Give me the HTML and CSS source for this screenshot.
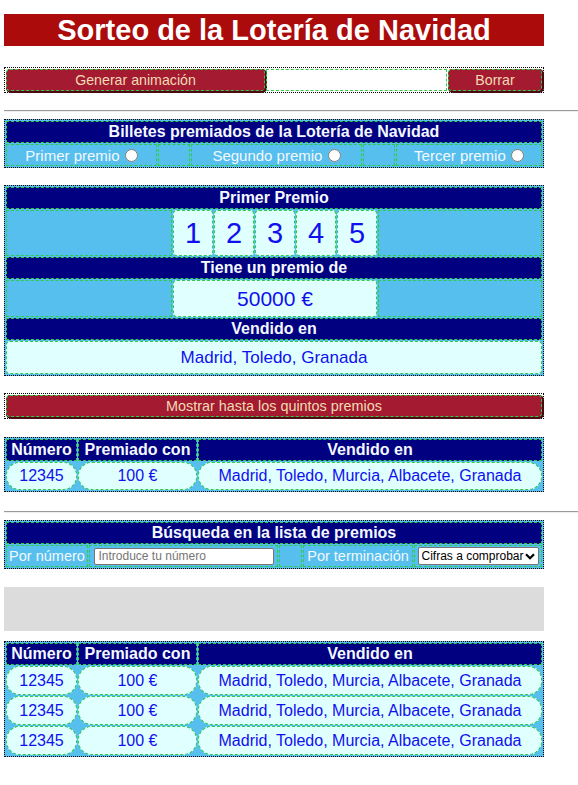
FILE: index.html
```html
<!DOCTYPE html>
<html lang="es">
<head>
<meta charset="utf-8">
<title>Sorteo de la Lotería de Navidad</title>
<link rel="stylesheet" href="styles.css">
</head>
<body>
<h1 class="title">Sorteo de la Lotería de Navidad</h1>

<table class="grid actions">
  <colgroup><col class="w-gen"><col><col class="w-del"></colgroup>
  <tr>
    <td class="bare"><button class="btn">Generar animación</button></td>
    <td class="c-mid"></td>
    <td class="bare"><button class="btn">Borrar</button></td>
  </tr>
</table>

<hr class="rule rule-a">

<table class="grid blue billetes">
  <colgroup><col class="w151"><col class="w32"><col class="w171"><col class="w32"><col></colgroup>
  <tr><th colspan="5" class="head">Billetes premiados de la Lotería de Navidad</th></tr>
  <tr class="radios">
    <td>Primer premio <input type="radio" name="p"></td>
    <td></td>
    <td>Segundo premio <input type="radio" name="p"></td>
    <td></td>
    <td>Tercer premio <input type="radio" name="p"></td>
  </tr>
</table>

<table class="grid blue primer">
  <colgroup><col class="w166"><col class="w40"><col class="w40"><col class="w40"><col class="w40"><col class="w40"><col></colgroup>
  <tr><th colspan="7" class="head">Primer Premio</th></tr>
  <tr class="digits">
    <td></td>
    <td class="cell dg">1</td>
    <td class="cell dg">2</td>
    <td class="cell dg">3</td>
    <td class="cell dg">4</td>
    <td class="cell dg">5</td>
    <td></td>
  </tr>
  <tr><th colspan="7" class="head">Tiene un premio de</th></tr>
  <tr class="prize">
    <td></td>
    <td colspan="5" class="cell amount">50000 €</td>
    <td></td>
  </tr>
  <tr><th colspan="7" class="head">Vendido en</th></tr>
  <tr>
    <td colspan="7" class="cell places">Madrid, Toledo, Granada</td>
  </tr>
</table>

<table class="grid actions more">
  <tr><td class="bare"><button class="btn long">Mostrar hasta los quintos premios</button></td></tr>
</table>

<table class="grid blue results first-results">
  <colgroup><col class="w71"><col class="w119"><col></colgroup>
  <tr>
    <th class="head">Número</th>
    <th class="head">Premiado con</th>
    <th class="head">Vendido en</th>
  </tr>
  <tr class="rrow">
    <td class="cell pill">12345</td>
    <td class="cell pill">100 €</td>
    <td class="cell pill">Madrid, Toledo, Murcia, Albacete, Granada</td>
  </tr>
</table>

<hr class="rule rule-b">

<table class="grid blue search">
  <colgroup><col class="w82"><col class="w189"><col class="w23"><col class="w110"><col></colgroup>
  <tr><th colspan="5" class="head">Búsqueda en la lista de premios</th></tr>
  <tr class="srow">
    <td>Por número</td>
    <td><input class="num" type="text" placeholder="Introduce tu número"></td>
    <td></td>
    <td>Por terminación</td>
    <td>
      <span class="select-wrap">
        <select class="cifras"><option>Cifras a comprobar</option></select>
        <svg class="chev" width="10" height="7" viewBox="0 0 10 7" aria-hidden="true"><path d="M1 1.2 L5 5.2 L9 1.2" fill="none" stroke="#000" stroke-width="2.2"/></svg>
      </span>
    </td>
  </tr>
</table>

<div class="empty-box"></div>

<table class="grid blue results last-results">
  <colgroup><col class="w71"><col class="w119"><col></colgroup>
  <tr>
    <th class="head">Número</th>
    <th class="head">Premiado con</th>
    <th class="head">Vendido en</th>
  </tr>
  <tr class="rrow">
    <td class="cell pill">12345</td>
    <td class="cell pill">100 €</td>
    <td class="cell pill">Madrid, Toledo, Murcia, Albacete, Granada</td>
  </tr>
  <tr class="rrow">
    <td class="cell pill">12345</td>
    <td class="cell pill">100 €</td>
    <td class="cell pill">Madrid, Toledo, Murcia, Albacete, Granada</td>
  </tr>
  <tr class="rrow">
    <td class="cell pill">12345</td>
    <td class="cell pill">100 €</td>
    <td class="cell pill">Madrid, Toledo, Murcia, Albacete, Granada</td>
  </tr>
</table>
</body>
</html>
```

FILE: styles.css
```css
* { box-sizing: border-box; }

body {
  margin: 0 0 0 4px;
  font-family: "Liberation Sans", Arial, sans-serif;
  background: #fff;
}

.title {
  width: 540px;
  margin: 14px 0 0;
  height: 32px;
  line-height: 33px;
  background: #ab0b0b;
  color: #fff;
  font-size: 29px;
  font-weight: bold;
  text-align: center;
}

.grid {
  width: 540px;
  border: 1px dotted #000;
  border-collapse: separate;
  border-spacing: 1px;
  table-layout: fixed;
}

.grid td, .grid th {
  border: 1px dashed #2ecc4a;
  padding: 0;
}

.blue { background: #56bfee; }

.head {
  background: #000080;
  color: #f4f8ff;
  font-size: 16px;
  font-weight: bold;
  text-align: center;
  height: 22px;
  line-height: 18px;
}

.cell {
  background: #e0ffff;
  color: #1010ee;
  text-align: center;
}

/* column widths */
.w-gen { width: 259px; }
.w-del { width: 94px; }
.w23 { width: 23px; }
.w32 { width: 32px; }
.w40 { width: 40px; }
.w71 { width: 71px; }
.w82 { width: 82px; }
.w110 { width: 110px; }
.w119 { width: 119px; }
.w151 { width: 151px; }
.w166 { width: 166px; }
.w171 { width: 171px; }
.w189 { width: 189px; }

/* Action buttons */
.actions { margin-top: 21px; }
.grid td.bare { border: 0; height: 22px; }
.c-mid { height: 22px; }

.btn {
  display: block;
  width: 100%;
  height: 22px;
  margin: 0;
  padding: 0;
  background: #a31a31;
  color: #f2dbb4;
  font-family: "Liberation Sans", Arial, sans-serif;
  font-size: 14.2px;
  border: 1px dashed #2ecc4a;
  border-radius: 4px;
  box-shadow: 1px 1px 0 1px #4a0a14;
}
.long { font-size: 14.4px; }

.rule {
  margin: 0;
  border: 0;
  border-top: 1px solid #9a9a9a;
  border-bottom: 1px solid #eeeeee;
  height: 2px;
}
.rule-a { margin-top: 17px; }
.rule-b { margin-top: 19px; }

/* Billetes */
.billetes { margin-top: 7px; }
.radios td {
  color: #f4f8ff;
  font-size: 15px;
  text-align: center;
  height: 22px;
  white-space: nowrap;
}
.radios input {
  margin: 0 0 0 1px;
  width: 13px;
  height: 13px;
  vertical-align: -1px;
}

/* Primer premio */
.primer { margin-top: 17px; }
.dg {
  font-size: 29px;
  height: 46px;
  border-radius: 4px;
  padding-top: 4px;
}
.prize td { height: 37px; }
.amount {
  font-size: 21px;
  border-radius: 4px;
  padding-top: 3px;
}
.places {
  font-size: 17px;
  height: 33px;
  border-radius: 4px;
  padding-top: 4px;
}

.more { margin-top: 17px; }

/* Results */
.first-results { margin-top: 18px; }
.pill {
  font-size: 16px;
  height: 28px;
  border-radius: 14px;
}
.last-results .pill { height: 29px; }

/* Search */
.search { margin-top: 7px; }
.srow td {
  color: #f4f8ff;
  font-size: 14.5px;
  height: 22px;
  white-space: nowrap;
  text-align: center;
}

.num {
  display: block;
  margin: 0 auto;
  width: 180px;
  height: 17px;
  font-family: "Liberation Sans", Arial, sans-serif;
  font-size: 12px;
  padding: 1px 4px;
  border: 1px solid #767676;
  border-radius: 2px;
  color: #000;
  background: #fff;
}
.num::placeholder { color: #757575; }

.select-wrap {
  position: relative;
  display: block;
  width: 121px;
  margin: 0 auto;
}

.cifras {
  display: block;
  width: 121px;
  height: 18px;
  font-family: "Liberation Sans", Arial, sans-serif;
  font-size: 12px;
  line-height: 16px;
  color: #000;
  background: #fff;
  border: 1px solid #767676;
  border-radius: 2px;
  padding: 0 0 0 3px;
  -webkit-appearance: none;
  appearance: none;
}

.chev {
  position: absolute;
  right: 4px;
  top: 6px;
  pointer-events: none;
}

.empty-box {
  width: 540px;
  height: 44px;
  margin-top: 18px;
  background: #dcdcdc;
}

.last-results { margin-top: 10px; }
```
